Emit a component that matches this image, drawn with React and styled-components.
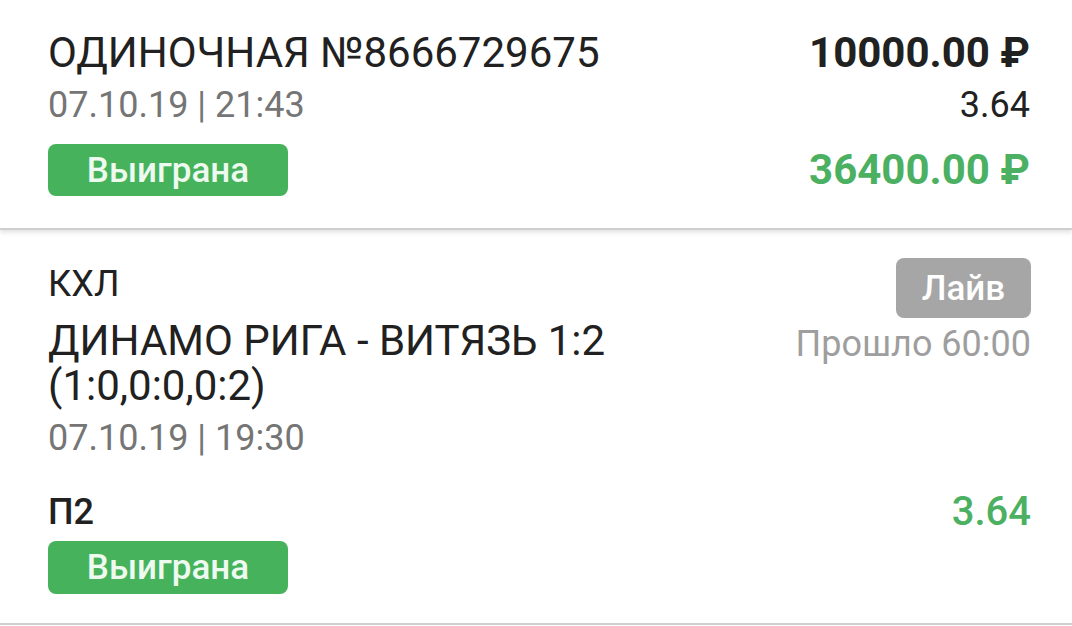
import React from 'react'
import styled, { createGlobalStyle } from 'styled-components'

const GlobalStyle = createGlobalStyle`
  body {
    margin: 0;
    background: #ffffff;
    font-family: Roboto, "Noto Sans", "Liberation Sans", sans-serif;
    color: #212121;
  }
`

const Page = styled.div`
  width: 1072px;
  height: 626px;
  overflow: hidden;
  background: #ffffff;
`

const Section = styled.div`
  padding: ${(p) => p.$padding};
  border-bottom: 2px solid #cfcfcf;
  box-shadow: ${(p) => (p.$shadow ? '0 3px 4px rgba(0, 0, 0, 0.1)' : 'none')};
  position: relative;
`

const Row = styled.div`
  display: flex;
  justify-content: space-between;
  align-items: ${(p) => p.$align || 'center'};
  margin-top: ${(p) => p.$mt || 0}px;
`

const Text = styled.div`
  font-size: ${(p) => p.$size}px;
  line-height: ${(p) => p.$lh}px;
  font-weight: ${(p) => p.$weight || 400};
  color: ${(p) => p.$color || '#212121'};
  text-align: ${(p) => p.$align || 'left'};
  margin-top: ${(p) => p.$mt || 0}px;
  white-space: nowrap;
`

const Badge = styled.div`
  display: inline-flex;
  align-items: center;
  justify-content: center;
  width: ${(p) => p.$width}px;
  height: ${(p) => p.$height}px;
  border-radius: 8px;
  background: ${(p) => p.$bg};
  color: ${(p) => p.$fg};
  font-size: 35px;
  font-weight: 500;
  margin-top: ${(p) => p.$mt || 0}px;
`

const Column = styled.div`
  display: flex;
  flex-direction: column;
  align-items: ${(p) => p.$align || 'flex-start'};
`

const GREEN = '#46b35c'
const GREEN_TEXT = '#4bb062'
const GRAY = '#757575'

const App = () => {
  return (
    <Page>
      <GlobalStyle />
      <Section $padding="27px 42px 32px 48px" $shadow>
        <Row>
          <Text $size={42} $lh={52}>ОДИНОЧНАЯ №8666729675</Text>
          <Text $size={42} $lh={52} $weight={700}>10000.00 ₽</Text>
        </Row>
        <Row>
          <Text $size={36} $lh={52} $color={GRAY}>07.10.19 | 21:43</Text>
          <Text $size={36} $lh={52}>3.64</Text>
        </Row>
        <Row $mt={13}>
          <Badge $width={240} $height={52} $bg={GREEN} $fg="#eefaf0">Выиграна</Badge>
          <Text $size={42} $lh={52} $weight={700} $color={GREEN_TEXT}>36400.00 ₽</Text>
        </Row>
      </Section>
      <Section $padding="28px 41px 29px 48px">
        <Row $align="flex-start">
          <Column>
            <Text $size={36} $lh={52}>КХЛ</Text>
            <Text $size={42} $lh={45} $mt={8}>
              ДИНАМО РИГА - ВИТЯЗЬ 1:2
              <br />
              (1:0,0:0,0:2)
            </Text>
            <Text $size={36} $lh={52} $mt={4} $color={GRAY}>07.10.19 | 19:30</Text>
          </Column>
          <Column $align="flex-end">
            <Badge $width={135} $height={60} $bg="#a6a6a6" $fg="#ffffff">Лайв</Badge>
            <Text $size={36} $lh={52} $color="#9e9e9e" $align="right">Прошло 60:00</Text>
          </Column>
        </Row>
        <Row $mt={24}>
          <Text $size={36} $lh={48} $weight={500}>П2</Text>
          <Text $size={40} $lh={48} $weight={500} $color={GREEN_TEXT}>3.64</Text>
        </Row>
        <Badge $width={240} $height={53} $bg={GREEN} $fg="#eefaf0" $mt={5}>Выиграна</Badge>
      </Section>
    </Page>
  )
}

export default App
